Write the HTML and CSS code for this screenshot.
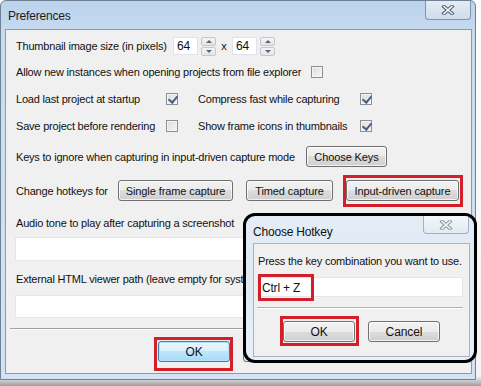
FILE: index.html
```html
<!DOCTYPE html>
<html lang="en">
<head>
    <meta charset="utf-8">
    <title>Preferences</title>
    <link rel="stylesheet" href="styles.css">
</head>
<body>
    <div class="window">
        <div class="titlebar">
            <span class="title">Preferences</span>
            <span class="close-btn">
                <svg width="14" height="10" viewBox="0 0 14 10">
                    <path d="M3 1.5 L11 8.5 M11 1.5 L3 8.5" stroke="#4e5a68" stroke-width="3.6" stroke-linecap="square"/>
                    <path d="M3 1.5 L11 8.5 M11 1.5 L3 8.5" stroke="#f4f6f8" stroke-width="1.6" stroke-linecap="square"/>
                </svg>
            </span>
        </div>

        <div class="client">
            <div class="row row-thumb">
                <span class="label label-thumb">Thumbnail image size (in pixels)</span>
                <span class="spin">
                    <span class="spin-box">64</span>
                    <span class="spin-arrows">
                        <span class="arrow arrow-up"></span>
                        <span class="arrow arrow-down"></span>
                    </span>
                </span>
                <span class="times">x</span>
                <span class="spin">
                    <span class="spin-box">64</span>
                    <span class="spin-arrows">
                        <span class="arrow arrow-up"></span>
                        <span class="arrow arrow-down"></span>
                    </span>
                </span>
            </div>

            <div class="row row-instances">
                <span class="label label-instances">Allow new instances when opening projects from file explorer</span>
                <span class="check"></span>
            </div>

            <div class="check-grid">
                <span class="label">Load last project at startup</span>
                <span class="check checked"></span>
                <span class="label">Compress fast while capturing</span>
                <span class="check checked"></span>

                <span class="label">Save project before rendering</span>
                <span class="check"></span>
                <span class="label">Show frame icons in thumbnails</span>
                <span class="check checked"></span>
            </div>

            <div class="row row-keys">
                <span class="label label-keys">Keys to ignore when capturing in input-driven capture mode</span>
                <button class="btn btn-keys">Choose Keys</button>
            </div>

            <div class="row row-hotkeys">
                <span class="label label-hotkeys">Change hotkeys for</span>
                <button class="btn btn-single">Single frame capture</button>
                <button class="btn btn-timed">Timed capture</button>
                <button class="btn btn-input marked marked-input">Input-driven capture</button>
            </div>

            <div class="field field-audio">
                <span class="label">Audio tone to play after capturing a screenshot</span>
                <div class="textbox textbox-audio"></div>
            </div>

            <div class="field field-viewer">
                <span class="label label-clipped">External HTML viewer path (leave empty for system default)</span>
                <div class="textbox textbox-viewer"></div>
            </div>

            <div class="separator"></div>

            <div class="actions">
                <button class="btn btn-action btn-default marked marked-ok">OK</button>
                <button class="btn btn-action">Cancel</button>
            </div>
        </div>
    </div>

    <div class="dialog">
        <div class="dialog-titlebar">
            <span class="dialog-title">Choose Hotkey</span>
            <span class="close-btn dialog-close">
                <svg width="14" height="10" viewBox="0 0 14 10">
                    <path d="M3 1.5 L11 8.5 M11 1.5 L3 8.5" stroke="#8a96a4" stroke-width="3.6" stroke-linecap="square"/>
                    <path d="M3 1.5 L11 8.5 M11 1.5 L3 8.5" stroke="#f4f6f8" stroke-width="1.6" stroke-linecap="square"/>
                </svg>
            </span>
        </div>
        <div class="dialog-client">
            <span class="label dialog-text">Press the key combination you want to use.</span>
            <div class="textbox hotkey-box">
                <span class="hotkey-value">Ctrl + Z</span>
                <span class="mark mark-hotkey"></span>
            </div>
            <div class="separator dialog-separator"></div>
            <div class="dialog-actions">
                <button class="btn btn-action marked marked-dialog-ok">OK</button>
                <button class="btn btn-action">Cancel</button>
            </div>
        </div>
    </div>
</body>
</html>
```

FILE: styles.css
```css
* {
    margin: 0;
    padding: 0;
    box-sizing: border-box;
}

:root {
    --text-color: #111;
    --client-bg: #f0f0f0;
    --mark-red: #d41f2a;
}

html {
    background: linear-gradient(to bottom, #fdfdfd 0, #f4f4f4 376px, #9d9d9d 386px);
    height: 100%;
}

body {
    width: 481px;
    height: 386px;
    position: relative;
    overflow: hidden;
    font-family: "Liberation Sans", Arial, sans-serif;
    font-size: 11px;
    letter-spacing: -0.2px;
    color: var(--text-color);
}

/* main window */

.window {
    width: 476px;
    height: 380px;
    border: 1px solid #6f8195;
    border-radius: 6px 6px 0 0;
    background: linear-gradient(to bottom, #bcd3ec 0, #c9dcf0 40px, #d3e3f4 100%);
    display: flex;
    flex-direction: column;
}

.titlebar {
    height: 28px;
    display: flex;
    justify-content: space-between;
    align-items: flex-start;
}

.title {
    font-size: 12px;
    padding: 8px 0 0 7px;
    color: #1c1c1c;
}

.close-btn {
    width: 46px;
    height: 19px;
    margin-right: 4px;
    border: 1px solid #8194ad;
    border-top: none;
    border-radius: 0 0 4px 4px;
    background: linear-gradient(to bottom, #e3ecf6, #cfdcea);
    display: flex;
    align-items: center;
    justify-content: center;
}

.client {
    flex: 1;
    margin: 0 3px 5px 4px;
    border: 1px solid #8b9cb1;
    background: var(--client-bg);
    padding: 0 0 0 10px;
    display: flex;
    flex-direction: column;
    position: relative;
}

.label {
    white-space: nowrap;
    line-height: 14px;
}

.label-clipped {
    width: 227px;
    overflow: hidden;
}

.row {
    display: flex;
    align-items: center;
    height: 20px;
}

.row-thumb {
    margin-top: 6px;
}

.label-thumb {
    width: 157px;
}

.spin {
    display: flex;
    align-items: center;
    gap: 3px;
}

.spin-box {
    width: 25px;
    height: 18px;
    background: #fff;
    border: 1px solid #e2e3ea;
    padding: 1px 0 0 3px;
    font-size: 12px;
    line-height: 15px;
}

.spin-arrows {
    display: flex;
    flex-direction: column;
    gap: 1px;
}

.arrow {
    width: 15px;
    height: 9px;
    border: 1px solid #c3c7cf;
    border-radius: 2px;
    background: linear-gradient(to bottom, #f5f5f5, #e4e4e4);
    position: relative;
}

.arrow::after {
    content: "";
    position: absolute;
    left: 4px;
    border-left: 3px solid transparent;
    border-right: 3px solid transparent;
}

.arrow-up::after {
    top: 2px;
    border-bottom: 3px solid #5d6670;
}

.arrow-down::after {
    top: 2px;
    border-top: 3px solid #5d6670;
}

.times {
    width: 16px;
    text-align: center;
}

.row-instances {
    margin-top: 6px;
}

.label-instances {
    width: 295px;
}

.check {
    width: 12px;
    height: 12px;
    border: 1px solid #8e8f8f;
    background: linear-gradient(135deg, #dcdcdc, #f7f7f7);
    box-shadow: inset 0 0 0 1px #f4f4f4;
    position: relative;
}

.check.checked::after {
    content: "";
    position: absolute;
    left: 3px;
    top: 0px;
    width: 4px;
    height: 7px;
    border-right: 2px solid #4a5f86;
    border-bottom: 2px solid #4a5f86;
    transform: rotate(40deg);
}

.check-grid {
    display: grid;
    grid-template-columns: 150px 12px 182px 12px;
    grid-auto-rows: 20px;
    row-gap: 7px;
    align-items: center;
    margin-top: 7px;
}

.check-grid .label:nth-child(4n + 3) {
    padding-left: 20px;
}

.row-keys {
    margin-top: 10px;
    height: 21px;
}

.label-keys {
    width: 290px;
}

.row-hotkeys {
    margin-top: 13px;
    height: 21px;
    gap: 13px;
}

.label-hotkeys {
    width: 89px;
}

/* buttons */

.btn {
    font-family: inherit;
    font-size: 11px;
    letter-spacing: -0.1px;
    color: var(--text-color);
    height: 21px;
    border: 1px solid #707070;
    border-radius: 3px;
    background: linear-gradient(to bottom, #f2f2f2 0, #ebebeb 50%, #dddddd 50%, #cfcfcf 100%);
    box-shadow: inset 0 0 0 1px rgba(255, 255, 255, 0.7);
    position: relative;
}

.btn-keys {
    width: 81px;
}

.btn-single {
    width: 115px;
}

.btn-timed {
    width: 87px;
}

.btn-input {
    width: 113px;
}

.btn-action {
    width: 72px;
    font-size: 12px;
}

.btn-default {
    border-color: #3c7fb1;
    background: linear-gradient(to bottom, #eaf6fd 0, #d9f0fc 50%, #bee6fd 50%, #a7d9f5 100%);
    box-shadow: inset 0 0 0 1px #b3e4f9;
}

/* red annotation boxes */

.marked::after,
.mark {
    content: "";
    position: absolute;
    border: 3px solid var(--mark-red);
    pointer-events: none;
}

.marked-input::after {
    inset: -6px -5px -7px -4px;
}

.marked-ok::after {
    inset: -5px -4px -10px -5px;
}

.marked-dialog-ok::after {
    inset: -6px -5px -5px -4px;
}

/* text fields */

.field {
    display: flex;
    flex-direction: column;
}

.field-audio {
    margin-top: 15px;
}

.field-audio .textbox {
    margin-top: 7px;
    height: 24px;
}

.field-viewer {
    margin-top: 11px;
}

.field-viewer .textbox {
    margin-top: 9px;
    height: 23px;
}

.textbox {
    width: 447px;
    margin-left: -1px;
    background: #fff;
    border: 1px solid #e3e6ec;
    position: relative;
}

.separator {
    height: 2px;
    margin: 10px 0 0 -6px;
    width: 455px;
    border-top: 1px solid #a0a0a0;
    border-bottom: 1px solid #fff;
}

.actions {
    display: flex;
    gap: 13px;
    margin: 11px 0 0 142px;
}

/* hotkey dialog */

.dialog {
    position: absolute;
    left: 243px;
    top: 213px;
    width: 234px;
    height: 150px;
    border: 3px solid #000;
    border-radius: 12px;
    background: linear-gradient(to bottom, #e4edf6, #dfe9f4 40%, #e9f0f7);
    display: flex;
    flex-direction: column;
    overflow: hidden;
}

.dialog-titlebar {
    height: 27px;
    display: flex;
    justify-content: space-between;
    align-items: flex-start;
}

.dialog-title {
    font-size: 12px;
    padding: 9px 0 0 7px;
}

.dialog-close {
    margin-right: 5px;
    height: 18px;
    border-color: #a3b1c3;
    background: linear-gradient(to bottom, #f4f7fb, #e3eaf2);
}

.dialog-client {
    flex: 1;
    margin: 0 4px 3px 7px;
    border: 1px solid #a9b3bf;
    background: var(--client-bg);
    padding: 10px 6px 0 3px;
    display: flex;
    flex-direction: column;
}

.dialog-text {
    font-size: 11px;
    padding-left: 1px;
}

.hotkey-box {
    width: 206px;
    height: 20px;
    margin: 9px 0 0 0;
    padding: 3px 0 0 4px;
    font-size: 12px;
    line-height: 14px;
}

.mark-hotkey {
    left: 0px;
    top: -4px;
    width: 56px;
    height: 27px;
}

.dialog-separator {
    width: 206px;
    margin: 10px 0 0 0;
    border-top-color: #b0b0b0;
}

.dialog-actions {
    display: flex;
    justify-content: center;
    gap: 13px;
    margin: 12px 0 0 3px;
}
```
